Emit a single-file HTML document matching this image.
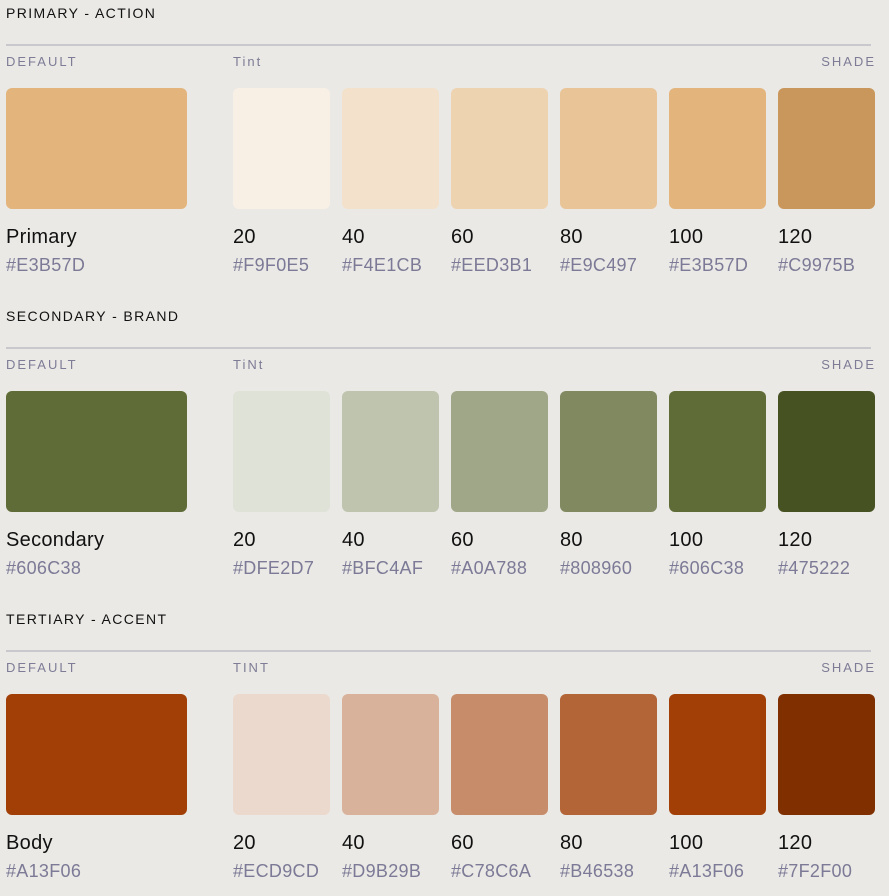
<!DOCTYPE html>
<html><head><meta charset="utf-8"><style>
*{margin:0;padding:0;box-sizing:border-box}
body{width:889px;height:896px;background:#EAE9E5;font-family:"Liberation Sans",sans-serif;position:relative;overflow:hidden}
.a{position:absolute;white-space:nowrap}
.t{font-size:14px;letter-spacing:1.4px;color:#111;line-height:14px}
.l{font-size:13px;letter-spacing:2px;color:#7E7C96;line-height:13px}
.line{height:2px;background:#C9C9CD;left:6px;width:865px}
.sw{border-radius:6px;height:121px}
.n{font-size:20px;color:#111;line-height:20px;letter-spacing:0.3px}
.h{font-size:18px;color:#7C7A96;line-height:18px;letter-spacing:0.3px}
</style></head><body>
<div id="root"></div>
<script>
var S=[
["PRIMARY - ACTION","Tint","Primary","E3B57D",["F9F0E5","F4E1CB","EED3B1","E9C497","E3B57D","C9975B"]],
["SECONDARY - BRAND","TiNt","Secondary","606C38",["DFE2D7","BFC4AF","A0A788","808960","606C38","475222"]],
["TERTIARY - ACCENT","TINT","Body","A13F06",["ECD9CD","D9B29B","C78C6A","B46538","A13F06","7F2F00"]]];
var h="",nm=["20","40","60","80","100","120"];
S.forEach(function(s,i){var o=i*303;
h+='<div class="a t" style="left:6px;top:'+(6+o)+'px">'+s[0]+'</div>';
h+='<div class="a line" style="top:'+(44+o)+'px"></div>';
h+='<div class="a l" style="left:6px;top:'+(55+o)+'px">DEFAULT</div>';
h+='<div class="a l" style="left:233px;top:'+(55+o)+'px">'+s[1]+'</div>';
h+='<div class="a l" style="right:13px;top:'+(55+o)+'px">SHADE</div>';
h+='<div class="a sw" style="left:6px;width:181px;top:'+(88+o)+'px;background:#'+s[3]+'"></div>';
h+='<div class="a n" style="left:6px;top:'+(227+o)+'px">'+s[2]+'</div>';
h+='<div class="a h" style="left:6px;top:'+(256+o)+'px">#'+s[3]+'</div>';
s[4].forEach(function(c,j){var x=233+j*109;
h+='<div class="a sw" style="left:'+x+'px;width:97px;top:'+(88+o)+'px;background:#'+c+'"></div>';
h+='<div class="a n" style="left:'+x+'px;top:'+(227+o)+'px">'+nm[j]+'</div>';
h+='<div class="a h" style="left:'+x+'px;top:'+(256+o)+'px">#'+c+'</div>';});
});
document.getElementById("root").innerHTML=h;
</script>
</body></html>
